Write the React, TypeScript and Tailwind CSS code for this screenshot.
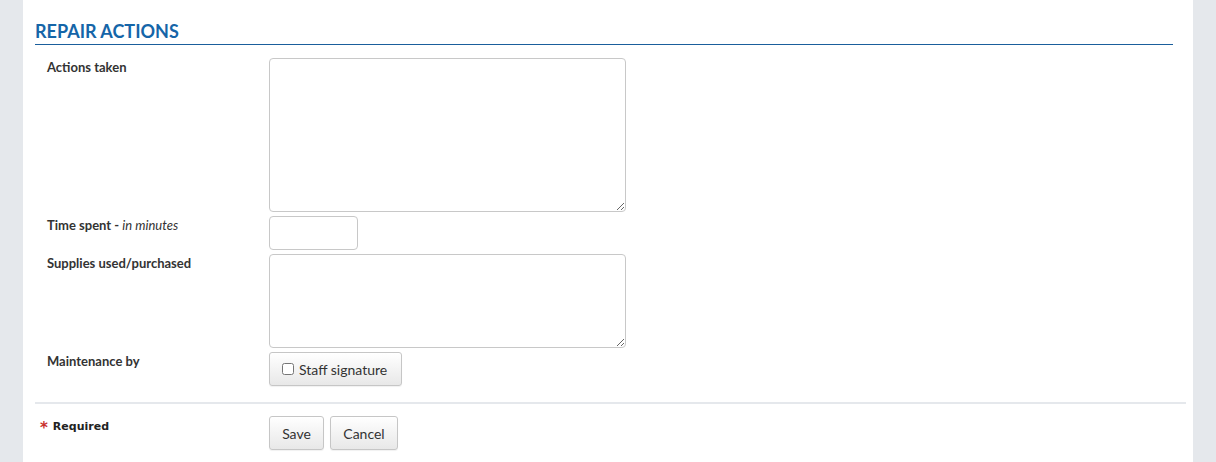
import { useState } from 'react'

const btn =
  'h-[34px] rounded-[3px] border border-[#c6c6c6] bg-gradient-to-b from-white to-[#e8e8e8] text-[14px] text-[#333] shadow-[0_1px_1px_rgba(0,0,0,0.06)]'

function Row({ label, children }: { label: React.ReactNode; children: React.ReactNode }) {
  return (
    <div className="flex items-start">
      <div className="w-[222px] shrink-0 text-[13px] font-bold leading-[18px] text-[#333]">{label}</div>
      <div>{children}</div>
    </div>
  )
}

export default function App() {
  const [signed, setSigned] = useState(false)

  return (
    <div className="flex h-[462px] overflow-hidden bg-[#e5e8ec] font-['Lato',sans-serif]">
      <div className="w-[23px] shrink-0" />
      <main className="w-[1170px] shrink-0 bg-white">
        {/* Section heading */}
        <div className="pl-3 pr-5 pt-[20px]">
          <h2 className="border-b border-[#1a5e9c] pb-[2px] text-[18px] font-bold leading-[22px] text-[#1565a8]">
            REPAIR ACTIONS
          </h2>
        </div>

        {/* Fields */}
        <div className="flex flex-col gap-1 pl-6 pt-[13px]">
          <Row label="Actions taken">
            <textarea className="block h-[154px] w-[357px] rounded-[4px] border border-[#c8c8c8] bg-white" />
          </Row>
          <Row
            label={
              <>
                Time spent - <i className="font-normal">in minutes</i>
              </>
            }
          >
            <input
              type="text"
              className="block h-[34px] w-[89px] rounded-[4px] border border-[#c8c8c8] bg-white"
            />
          </Row>
          <Row label="Supplies used/purchased">
            <textarea className="block h-[94px] w-[357px] rounded-[4px] border border-[#c8c8c8] bg-white" />
          </Row>
          <Row label="Maintenance by">
            <label className={`${btn} flex w-[133px] items-center gap-[5px] pl-[12px]`}>
              <input
                type="checkbox"
                checked={signed}
                onChange={(e) => setSigned(e.target.checked)}
                className="m-0 h-[12px] w-[12px]"
              />
              <span>Staff signature</span>
            </label>
          </Row>
        </div>

        {/* Footer */}
        <div className="mt-[16px] pl-3 pr-[7px]">
          <div className="h-[2px] bg-[#e5e8ec]" />
        </div>
        <div className="flex items-start pt-[12px] pl-[17px]">
          <div className="flex w-[229px] shrink-0 items-start pt-[3px] font-['DejaVu_Sans',sans-serif] text-[11px] font-bold leading-[16px] text-[#222]">
            <span className="mr-[5px] text-[15px] leading-[18px] text-[#c9302c]">*</span>
            <span>Required</span>
          </div>
          <div className="flex gap-[6px]">
            <button className={`${btn} w-[55px]`}>Save</button>
            <button className={`${btn} w-[68px]`}>Cancel</button>
          </div>
        </div>
      </main>
      <div className="flex-1" />
    </div>
  )
}
